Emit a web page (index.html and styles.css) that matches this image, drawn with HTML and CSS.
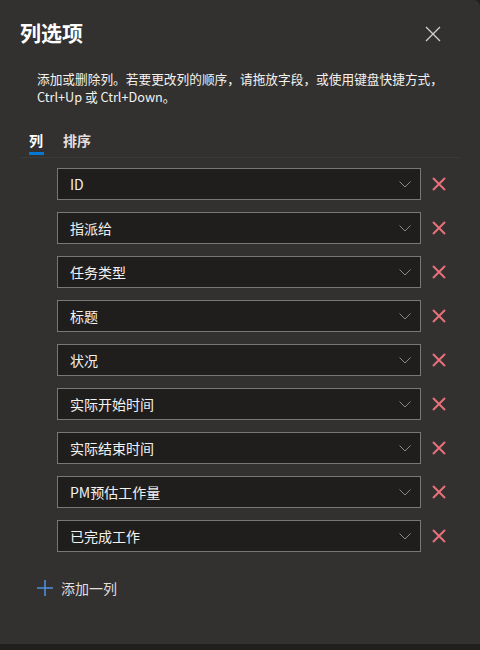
FILE: index.html
```html
<!DOCTYPE html>
<html lang="zh-CN">
<head>
<meta charset="utf-8">
<link rel="stylesheet" href="styles.css">
</head>
<body>
<div class="panel">
  <div class="header">
    <h1 class="title">列选项</h1>
    <button class="close" aria-label="关闭">
      <svg width="16" height="16" viewBox="0 0 16 16"><path d="M1 1L15 15M15 1L1 15" stroke="#d2d0ce" stroke-width="1.3" fill="none"/></svg>
    </button>
  </div>
  <p class="desc">添加或删除列。若要更改列的顺序，请拖放字段，或使用键盘快捷方式，<br>Ctrl+Up 或 Ctrl+Down。</p>
  <div class="tabs">
    <div class="tab active">列</div>
    <div class="tab">排序</div>
  </div>
  <div class="rows">
    <div class="row"><div class="select"><span>ID</span><svg class="chev" width="12" height="7" viewBox="0 0 12 7"><path d="M0.5 0.5L6 6L11.5 0.5" stroke="#8a8886" stroke-width="1" fill="none"/></svg></div><svg class="del" width="14" height="14" viewBox="0 0 14 14"><path d="M1 1L13 13M13 1L1 13" stroke="#e8707a" stroke-width="2" fill="none"/></svg></div>
    <div class="row"><div class="select"><span>指派给</span><svg class="chev" width="12" height="7" viewBox="0 0 12 7"><path d="M0.5 0.5L6 6L11.5 0.5" stroke="#8a8886" stroke-width="1" fill="none"/></svg></div><svg class="del" width="14" height="14" viewBox="0 0 14 14"><path d="M1 1L13 13M13 1L1 13" stroke="#e8707a" stroke-width="2" fill="none"/></svg></div>
    <div class="row"><div class="select"><span>任务类型</span><svg class="chev" width="12" height="7" viewBox="0 0 12 7"><path d="M0.5 0.5L6 6L11.5 0.5" stroke="#8a8886" stroke-width="1" fill="none"/></svg></div><svg class="del" width="14" height="14" viewBox="0 0 14 14"><path d="M1 1L13 13M13 1L1 13" stroke="#e8707a" stroke-width="2" fill="none"/></svg></div>
    <div class="row"><div class="select"><span>标题</span><svg class="chev" width="12" height="7" viewBox="0 0 12 7"><path d="M0.5 0.5L6 6L11.5 0.5" stroke="#8a8886" stroke-width="1" fill="none"/></svg></div><svg class="del" width="14" height="14" viewBox="0 0 14 14"><path d="M1 1L13 13M13 1L1 13" stroke="#e8707a" stroke-width="2" fill="none"/></svg></div>
    <div class="row"><div class="select"><span>状况</span><svg class="chev" width="12" height="7" viewBox="0 0 12 7"><path d="M0.5 0.5L6 6L11.5 0.5" stroke="#8a8886" stroke-width="1" fill="none"/></svg></div><svg class="del" width="14" height="14" viewBox="0 0 14 14"><path d="M1 1L13 13M13 1L1 13" stroke="#e8707a" stroke-width="2" fill="none"/></svg></div>
    <div class="row"><div class="select"><span>实际开始时间</span><svg class="chev" width="12" height="7" viewBox="0 0 12 7"><path d="M0.5 0.5L6 6L11.5 0.5" stroke="#8a8886" stroke-width="1" fill="none"/></svg></div><svg class="del" width="14" height="14" viewBox="0 0 14 14"><path d="M1 1L13 13M13 1L1 13" stroke="#e8707a" stroke-width="2" fill="none"/></svg></div>
    <div class="row"><div class="select"><span>实际结束时间</span><svg class="chev" width="12" height="7" viewBox="0 0 12 7"><path d="M0.5 0.5L6 6L11.5 0.5" stroke="#8a8886" stroke-width="1" fill="none"/></svg></div><svg class="del" width="14" height="14" viewBox="0 0 14 14"><path d="M1 1L13 13M13 1L1 13" stroke="#e8707a" stroke-width="2" fill="none"/></svg></div>
    <div class="row"><div class="select"><span>PM预估工作量</span><svg class="chev" width="12" height="7" viewBox="0 0 12 7"><path d="M0.5 0.5L6 6L11.5 0.5" stroke="#8a8886" stroke-width="1" fill="none"/></svg></div><svg class="del" width="14" height="14" viewBox="0 0 14 14"><path d="M1 1L13 13M13 1L1 13" stroke="#e8707a" stroke-width="2" fill="none"/></svg></div>
    <div class="row"><div class="select"><span>已完成工作</span><svg class="chev" width="12" height="7" viewBox="0 0 12 7"><path d="M0.5 0.5L6 6L11.5 0.5" stroke="#8a8886" stroke-width="1" fill="none"/></svg></div><svg class="del" width="14" height="14" viewBox="0 0 14 14"><path d="M1 1L13 13M13 1L1 13" stroke="#e8707a" stroke-width="2" fill="none"/></svg></div>
  </div>
  <div class="add">
    <svg width="16" height="16" viewBox="0 0 16 16"><path d="M8 0V16M0 8H16" stroke="#4f8fd8" stroke-width="1.6" fill="none"/></svg>
    <span>添加一列</span>
  </div>
</div>
<div class="footer"></div>
</body>
</html>
```

FILE: styles.css
```css
html, body {
  margin: 0;
  padding: 0;
  background: #201f1e;
}
body {
  width: 480px;
  height: 650px;
  display: flex;
  flex-direction: column;
  font-family: "Noto Sans CJK SC", "Noto Sans", sans-serif;
  color: #f3f2f1;
}
.panel {
  height: 644px;
  background: #323130;
  border-top-right-radius: 6px;
  box-sizing: border-box;
  padding: 0 20px;
  display: flex;
  flex-direction: column;
}
.footer {
  flex: 1;
  background: #201f1e;
}
.header {
  display: flex;
  justify-content: space-between;
  align-items: center;
  height: 66px;
}
.title {
  margin: 0;
  font-size: 21px;
  font-weight: 700;
  line-height: 28px;
  margin-top: -2px;
  color: #ffffff;
}
.close {
  background: none;
  border: 0;
  padding: 0;
  width: 16px;
  height: 16px;
  margin-right: 19px;
  margin-top: 2px;
  display: flex;
}
.desc {
  margin: 4px 0 0 17px;
  font-size: 12.7px;
  line-height: 18px;
  color: #f3f2f1;
}
.tabs {
  display: flex;
  gap: 19px;
  margin-top: 24px;
  padding-left: 9px;
  border-bottom: 1px solid #3b3a39;
}
.tab {
  font-size: 14px;
  font-weight: 600;
  line-height: 20px;
  padding-bottom: 5px;
  color: #e1dfdd;
}
.tab.active {
  color: #ffffff;
  box-shadow: inset 0 -3px 0 #0078d4;
  padding-bottom: 5px;
  margin-bottom: 2px;
  padding-right: 1px;
}
.rows {
  display: flex;
  flex-direction: column;
  gap: 12px;
  margin-top: 10px;
  padding-left: 37px;
}
.row {
  display: flex;
  align-items: center;
  gap: 11px;
}
.select {
  width: 364px;
  height: 32px;
  box-sizing: border-box;
  border: 1px solid #797775;
  background: #1f1e1d;
  display: flex;
  align-items: center;
  justify-content: space-between;
  padding: 0 9px 0 12px;
  font-size: 14px;
  color: #f3f2f1;
}
.select span {
  line-height: 20px;
}
.del {
  flex: none;
}
.add {
  display: flex;
  align-items: center;
  gap: 8px;
  margin-top: 26px;
  padding-left: 17px;
  font-size: 14px;
  color: #e1dfdd;
}
```
